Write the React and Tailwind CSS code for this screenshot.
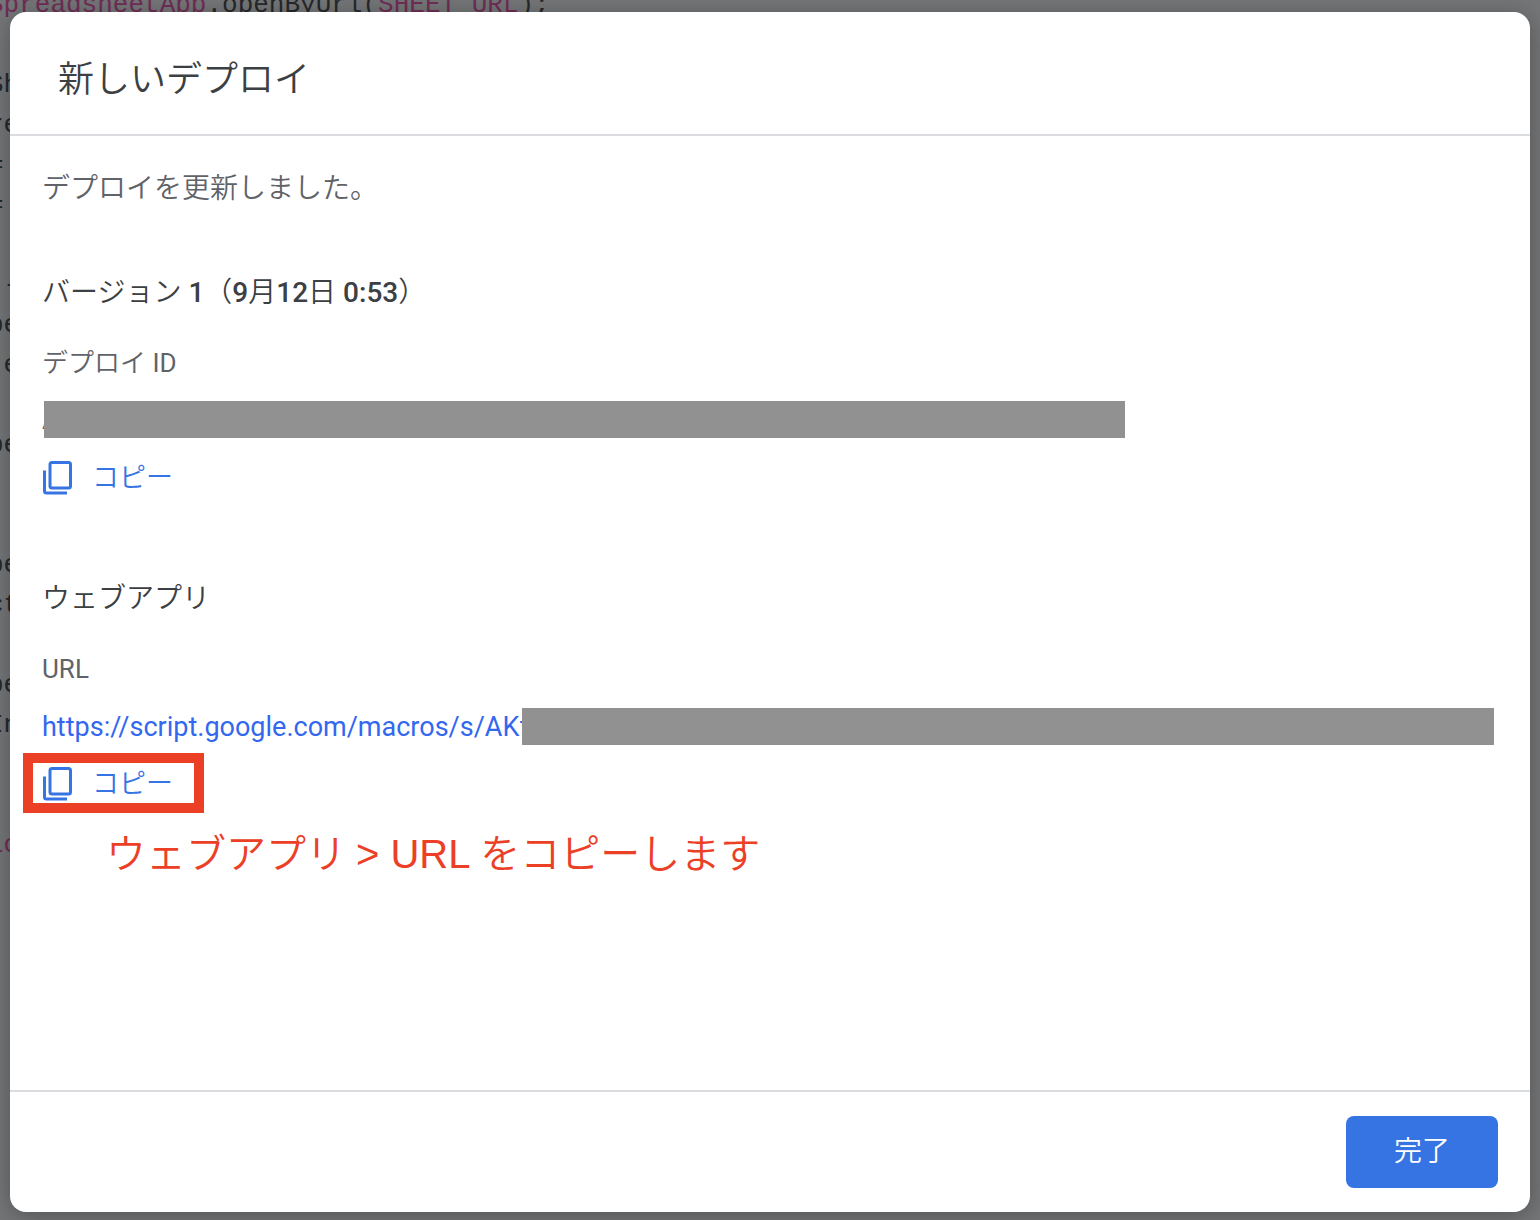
const codeLines = [
  { id: 0, name: "SpreadsheetApp", call: ".openByUrl(", arg: "SHEET_URL", end: ");" },
  { id: 1 },
  { id: 2, call: "Sh" },
  { id: 3, call: "re" },
  { id: 4, call: "=" },
  { id: 5, call: "=" },
  { id: 6 },
  { id: 7, call: " -" },
  { id: 8, call: "pe" },
  { id: 9, call: " e" },
  { id: 10 },
  { id: 11, call: "pe" },
  { id: 12 },
  { id: 13 },
  { id: 14, call: "pe" },
  { id: 15, call: "ct" },
  { id: 16 },
  { id: 17, call: "pe" },
  { id: 18, call: "In" },
  { id: 19 },
  { id: 20 },
  { id: 21, name: "Lo" },
];

function CodeBackdrop() {
  return (
    <pre
      aria-hidden="true"
      className="absolute -top-[15px] -left-3 font-['Liberation_Mono',monospace] text-[26px] leading-10 text-[#26282a]"
    >
      {codeLines.map((line) => (
        <div key={line.id} className="h-10">
          <span className="text-[#702d56]">{line.name}</span>
          <span>{line.call}</span>
          <span className="text-[#702d56]">{line.arg}</span>
          <span>{line.end}</span>
        </div>
      ))}
    </pre>
  );
}

function CopyIcon() {
  return (
    <svg viewBox="0 0 30 34" className="h-[34px] w-[30px]" fill="none" stroke="currentColor" strokeWidth="3" aria-hidden="true">
      <rect x="8" y="1.5" width="20.5" height="25.5" rx="2" />
      <path d="M2.5 9.5v20.5a2 2 0 0 0 2 2h20.5" />
    </svg>
  );
}

function CopyButton({ label }) {
  return (
    <button type="button" aria-label={label} className="flex h-10 items-center gap-5 text-[27px] leading-10 font-[350] text-[#3574e2]">
      <CopyIcon />
      <span>コピー</span>
    </button>
  );
}

export default function App() {
  return (
    <div className="relative min-h-screen overflow-hidden bg-[#747678] px-2.5 pt-3 pb-2 font-[Roboto,'Noto_Sans_CJK_JP',sans-serif]">
      <CodeBackdrop />
      <div
        role="dialog"
        aria-labelledby="dialog-title"
        className="relative flex min-h-[calc(100vh-20px)] flex-col rounded-2xl bg-white text-[#5f6368] shadow-[0_4px_24px_rgba(0,0,0,0.3)]"
      >
        <header className="border-b-2 border-[#dadce0] px-12 pt-[43px] pb-[29px]">
          <h1 id="dialog-title" className="text-4xl leading-[50px] font-[350] text-[#3c4043]">新しいデプロイ</h1>
        </header>

        <main className="flex-1 px-8 pt-[33px]">
          <p className="text-[28px] leading-10 font-[350]">デプロイを更新しました。</p>

          <section className="mt-16">
            <h2 className="text-[28px] leading-10 font-medium text-[#3c4043]">
              <span className="font-[350]">バージョン</span> 1<span className="font-[350]">（</span>9
              <span className="font-[350]">月</span>12<span className="font-[350]">日</span> 0:53
              <span className="font-[350]">）</span>
            </h2>
            <h3 className="mt-[30px] text-[26px] leading-10"><span className="font-[350]">デプロイ</span> ID</h3>
            <div className="mt-[18px] mr-[373px] flex h-[37px] items-center">
              <span className="w-0.5 text-[26px] leading-10">A</span>
              <div className="relative h-full flex-1 bg-[#919191]" />
            </div>
            <div className="mt-5">
              <CopyButton label="デプロイ ID をコピー" />
            </div>
          </section>

          <section className="mt-[81px]">
            <h2 className="text-[28px] leading-10 font-[350] text-[#3c4043]">ウェブアプリ</h2>
            <h3 className="mt-[30px] text-[26px] leading-10">URL</h3>
            <div className="mt-[19px] flex h-[37px] items-center">
              <a href="https://script.google.com/macros/s/AKf" className="w-[480px] shrink-0 text-[27px] leading-10 whitespace-nowrap text-[#3367f0]">
                https://script.google.com/macros/s/AKf
              </a>
              <div className="relative mr-1 h-full flex-1 bg-[#919191]" />
            </div>
            <div className="mt-2 -ml-[19px] flex h-[60px] w-[181px] items-center border-10 border-[#eb4026] pt-0.5 pl-[9px]">
              <CopyButton label="URL をコピー" />
            </div>
            <p className="mt-[11px] pl-16 text-[40px] leading-[60px] text-[#eb4026]">
              <span className="font-[350]">ウェブアプリ</span>{" "}
              <span className="font-['Liberation_Sans',Arial,sans-serif]">&gt; URL</span>{" "}
              <span className="font-[350]">をコピーします</span>
            </p>
          </section>
        </main>

        <footer className="flex justify-end border-t-2 border-[#dadce0] px-8 py-6">
          <button type="button" className="h-[72px] rounded-lg bg-[#3574e2] px-12 text-[28px] leading-10 font-[350] text-white">
            完了
          </button>
        </footer>
      </div>
    </div>
  );
}
